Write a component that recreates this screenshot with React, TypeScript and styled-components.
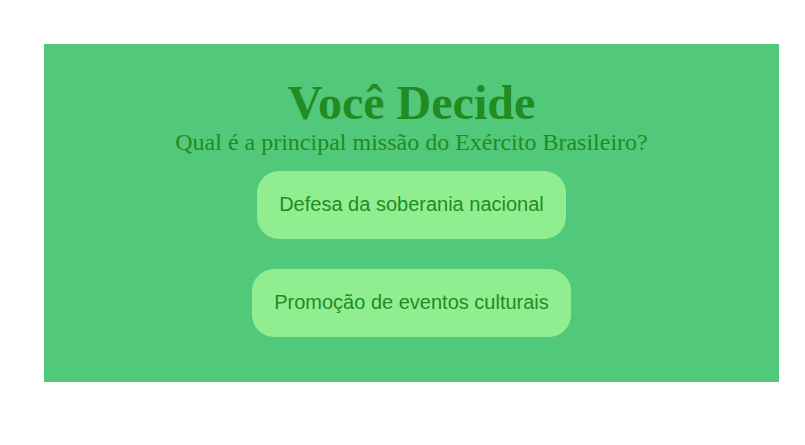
import React from "react";
import styled, { createGlobalStyle } from "styled-components";

const Global = createGlobalStyle`
  html, body { margin: 0; padding: 0; background: #ffffff; }
  body { font-family: "Liberation Serif", "Times New Roman", serif; }
`;

const Page = styled.div`
  padding: 44px 0 0 44px;
`;

const Panel = styled.section`
  width: 735px;
  height: 338px;
  box-sizing: border-box;
  background: #52c97a;
  padding-top: 33px;
  display: flex;
  flex-direction: column;
  align-items: center;
`;

const Title = styled.h1`
  margin: 0;
  font-family: "Liberation Serif", "Times New Roman", serif;
  font-weight: bold;
  font-size: 48px;
  line-height: 52px;
  color: #228b22;
`;

const Question = styled.p`
  margin: 0;
  font-family: "Liberation Serif", "Times New Roman", serif;
  font-size: 24px;
  line-height: 26px;
  color: #228b22;
`;

const Options = styled.div`
  display: flex;
  flex-direction: column;
  align-items: center;
  gap: 30px;
  margin-top: 16px;
`;

const Option = styled.button`
  font-family: "Liberation Sans", Arial, sans-serif;
  font-size: 20px;
  line-height: 23px;
  color: #228b22;
  background: #90ee90;
  border: none;
  border-radius: 22px;
  padding: 22px 22px 23px;
  cursor: pointer;
`;

export default function App() {
  return (
    <>
      <Global />
      <Page>
        <Panel>
          <Title>Você Decide</Title>
          <Question>Qual é a principal missão do Exército Brasileiro?</Question>
          <Options>
            <Option>Defesa da soberania nacional</Option>
            <Option>Promoção de eventos culturais</Option>
          </Options>
        </Panel>
      </Page>
    </>
  );
}
